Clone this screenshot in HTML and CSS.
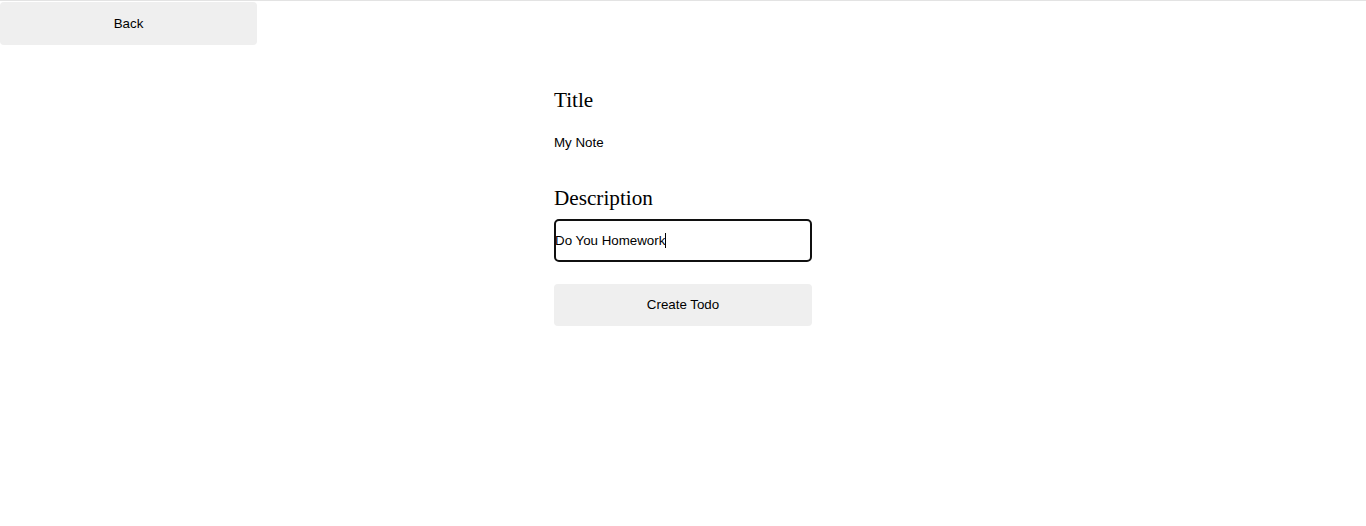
FILE: index.html
```html
<!DOCTYPE html>
<html>
<head>
<meta charset="utf-8">
<link rel="stylesheet" href="styles.css">
</head>
<body>
<div class="topbar">
  <button class="btn back">Back</button>
</div>
<main class="form">
  <h2 class="label">Title</h2>
  <div class="value">My Note</div>
  <h2 class="label desc">Description</h2>
  <div class="input"><span class="text">Do You Homework</span><span class="caret"></span></div>
  <button class="btn create">Create Todo</button>
</main>
</body>
</html>
```
FILE: styles.css
```css
html, body { margin: 0; padding: 0; background: #fff; }
body { font-family: "Liberation Sans", Arial, sans-serif; font-size: 13.33px; color: #000; }
.topbar { border-top: 1px solid #e3e3e3; padding-top: 1px; }
.btn {
  display: block;
  border: none;
  background: #efefef;
  border-radius: 4px;
  font-family: "Liberation Sans", Arial, sans-serif;
  font-size: 13.33px;
  color: #000;
  height: 42px;
  padding: 0;
}
.back { width: 257px; height: 43px; }
.form { width: 258px; margin: 0 auto; display: flex; flex-direction: column; padding-top: 43px; }
.label { font-family: "Liberation Serif", "Times New Roman", serif; font-weight: normal; font-size: 21.2px; line-height: 24px; margin: 0; }
.value { margin-top: 23px; line-height: 15px; }
.desc { margin-top: 36px; }
.input {
  margin-top: 9px;
  height: 43px;
  box-sizing: border-box;
  border: 2px solid #101010;
  border-radius: 5px;
  display: flex;
  align-items: center;
  line-height: 15px;
}
.text { margin-left: -1px; }
.caret { display: inline-block; width: 1px; height: 15px; background: #000; }
.create { margin-top: 22px; width: 258px; padding-bottom: 2px; }
```
